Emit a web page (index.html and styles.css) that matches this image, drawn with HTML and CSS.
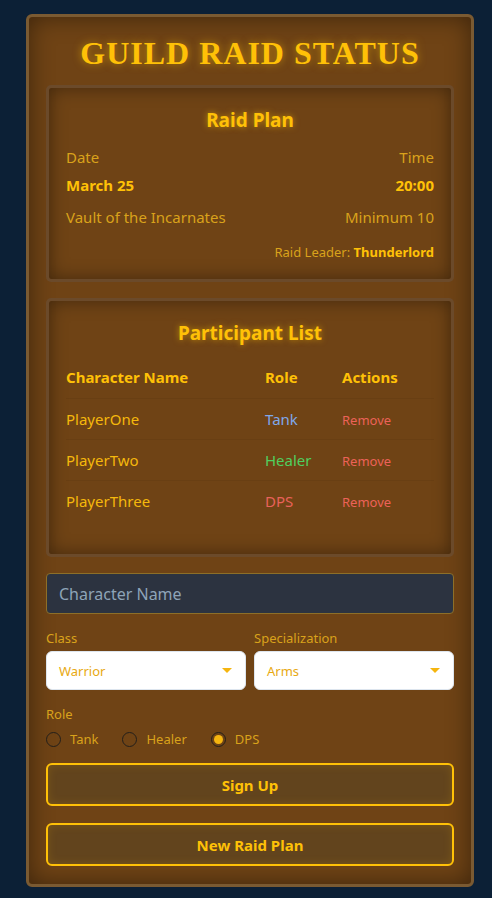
FILE: index.html
```html
<!DOCTYPE html>
<html lang="en">
<head>
    <meta charset="UTF-8">
    <meta name="viewport" content="width=device-width, initial-scale=1.0">
    <title>Guild Raid Status</title>
    <link rel="stylesheet" href="styles.css">
</head>
<body>
    <div class="container">
        <h1>GUILD RAID STATUS</h1>

        <div class="panel">
            <h2>Raid Plan</h2>
            <div class="plan-row muted">
                <span>Date</span>
                <span>Time</span>
            </div>
            <div class="plan-row strong">
                <span>March 25</span>
                <span>20:00</span>
            </div>
            <div class="plan-row muted">
                <span>Vault of the Incarnates</span>
                <span>Minimum 10</span>
            </div>
            <div class="leader">Raid Leader: <strong>Thunderlord</strong></div>
        </div>

        <div class="panel">
            <h2>Participant List</h2>
            <table class="roster">
                <thead>
                    <tr>
                        <th class="col-name">Character Name</th>
                        <th class="col-role">Role</th>
                        <th>Actions</th>
                    </tr>
                </thead>
                <tbody>
                    <tr>
                        <td>PlayerOne</td>
                        <td class="role-tank">Tank</td>
                        <td><span class="remove">Remove</span></td>
                    </tr>
                    <tr>
                        <td>PlayerTwo</td>
                        <td class="role-healer">Healer</td>
                        <td><span class="remove">Remove</span></td>
                    </tr>
                    <tr>
                        <td>PlayerThree</td>
                        <td class="role-dps">DPS</td>
                        <td><span class="remove">Remove</span></td>
                    </tr>
                </tbody>
            </table>
        </div>

        <input type="text" class="name-input" placeholder="Character Name">

        <div class="select-row">
            <div class="form-group">
                <label>Class</label>
                <div class="select">
                    <span>Warrior</span>
                    <span class="caret"></span>
                </div>
            </div>
            <div class="form-group">
                <label>Specialization</label>
                <div class="select">
                    <span>Arms</span>
                    <span class="caret"></span>
                </div>
            </div>
        </div>

        <div class="form-group role-group">
            <label>Role</label>
            <div class="radios">
                <span class="radio"><span class="dot"></span>Tank</span>
                <span class="radio"><span class="dot"></span>Healer</span>
                <span class="radio checked"><span class="dot"></span>DPS</span>
            </div>
        </div>

        <button class="btn">Sign Up</button>
        <button class="btn">New Raid Plan</button>
    </div>
</body>
</html>
```

FILE: styles.css
```css
body {
    margin: 0;
    padding: 14px 18px 12px 26px;
    background-color: #0c2036;
    font-family: 'Noto Sans', sans-serif;
    color: #ffc107;
}

.container {
    background-color: #6f4315;
    border: 3px solid #7a5a32;
    border-radius: 6px;
    padding: 17px 17px 18px 17px;
    box-shadow: inset 0 0 24px rgba(0,0,0,0.45);
}

h1 {
    font-family: 'Liberation Serif', serif;
    font-size: 32px;
    line-height: 38px;
    letter-spacing: 1px;
    text-align: center;
    margin: 0 0 13px;
    color: #ffc107;
    text-shadow: 0 0 8px rgba(255,193,7,0.55);
}

.panel {
    border: 3px solid #6b4a2a;
    border-radius: 5px;
    padding: 18px 17px 17px;
    margin-bottom: 16px;
    box-shadow: inset 0 0 18px rgba(0,0,0,0.4);
}

h2 {
    font-size: 19px;
    line-height: 28px;
    text-align: center;
    margin: 0 0 12px;
    color: #ffc107;
    text-shadow: 0 0 6px rgba(255,193,7,0.6);
}

.plan-row {
    display: flex;
    justify-content: space-between;
    font-size: 15px;
    line-height: 22px;
}

.plan-row.muted {
    color: #d9a21b;
}

.plan-row.strong {
    font-weight: bold;
    margin: 6px 0 10px;
}

.leader {
    text-align: right;
    font-size: 13px;
    line-height: 20px;
    margin-top: 14px;
    color: #d9a21b;
}

.leader strong {
    color: #ffc107;
}

.roster {
    width: 100%;
    border-collapse: collapse;
    font-size: 15px;
    margin: -2px 0 16px;
}

.roster th {
    text-align: left;
    padding: 10px 0;
    line-height: 21px;
}

.roster td {
    padding: 10px 0 9px;
    line-height: 21px;
    color: #f5b80c;
    border-top: 1px solid rgba(0,0,0,0.05);
}

.col-name {
    width: 199px;
}

.col-role {
    width: 77px;
}

.role-tank { color: #7fa8ea !important; }
.role-healer { color: #4fcf5f !important; }
.role-dps { color: #e8625a !important; }

.remove {
    font-size: 13px;
    line-height: 1;
    color: #ec6258;
}

.name-input {
    display: block;
    width: 100%;
    height: 41px;
    box-sizing: border-box;
    background-color: #2c3340;
    border: 1px solid #8d6f28;
    border-radius: 4px;
    padding: 0 12px;
    font-family: 'Noto Sans', sans-serif;
    font-size: 16px;
    color: #c9d3dc;
    margin-bottom: 14px;
}

.name-input::placeholder {
    color: #8ea4b8;
}

.select-row {
    display: flex;
    gap: 8px;
}

.select-row .form-group {
    flex: 1;
}

.form-group {
    margin-bottom: 14px;
}

.role-group {
    margin-bottom: 12px;
}

.form-group label {
    display: block;
    font-size: 13px;
    line-height: 20px;
    margin-bottom: 3px;
    color: #d9a21b;
}

.select {
    display: flex;
    align-items: center;
    justify-content: space-between;
    height: 39px;
    box-sizing: border-box;
    background-color: #fff;
    border: 1px solid #dde5ee;
    border-radius: 6px;
    padding: 0 13px 0 12px;
    font-size: 13px;
    color: #e8a912;
}

.caret {
    width: 0;
    height: 0;
    border-left: 5px solid transparent;
    border-right: 5px solid transparent;
    border-top: 5px solid #f5b50f;
}

.radios {
    display: flex;
    gap: 24px;
    height: 24px;
    align-items: center;
}

.radio {
    display: flex;
    align-items: center;
    font-size: 13px;
    color: #d9a21b;
}

.dot {
    width: 15px;
    height: 15px;
    box-sizing: border-box;
    border: 1.5px solid #231f1a;
    border-radius: 50%;
    margin-right: 9px;
    display: flex;
    align-items: center;
    justify-content: center;
}

.radio.checked .dot::after {
    content: "";
    width: 9px;
    height: 9px;
    border-radius: 50%;
    background-color: #f5b50f;
}

.btn {
    display: block;
    width: 100%;
    height: 43px;
    margin-bottom: 17px;
    background-color: #62441d;
    border: 2px solid #ffc107;
    border-radius: 6px;
    font-family: 'Noto Sans', sans-serif;
    font-size: 15px;
    font-weight: bold;
    color: #ffc107;
    box-shadow: inset 0 0 10px rgba(255,193,7,0.15);
    cursor: pointer;
}

.btn:last-child {
    margin-bottom: 0;
}
```
